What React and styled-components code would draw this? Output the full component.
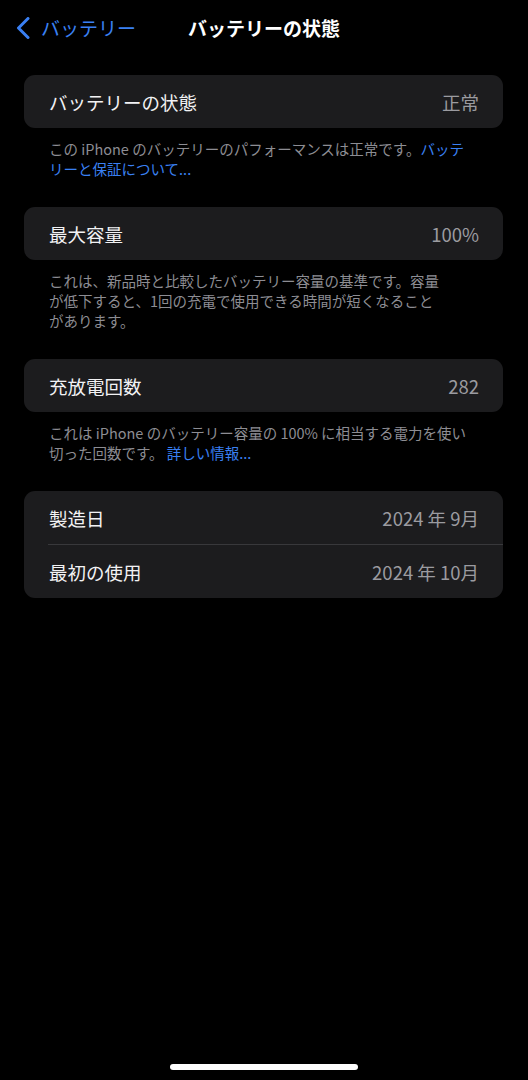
import React from "react";
import styled, { createGlobalStyle } from "styled-components";

const GlobalStyle = createGlobalStyle`
  html, body {
    margin: 0;
    padding: 0;
    background: #000;
  }
  body {
    font-family: "Noto Sans CJK JP", "Noto Sans", sans-serif;
    -webkit-font-smoothing: antialiased;
  }
  * { box-sizing: border-box; }
`;

const Screen = styled.div`
  width: 528px;
  min-height: 1080px;
  background: #000;
  display: flex;
  flex-direction: column;
`;

const NavBar = styled.header`
  height: 55px;
  display: grid;
  grid-template-columns: 1fr auto 1fr;
  align-items: center;
  padding-top: 1px;
`;

const BackButton = styled.button`
  justify-self: start;
  display: flex;
  align-items: center;
  gap: 11px;
  padding: 0 0 0 16px;
  background: none;
  border: none;
  color: #3a80f3;
  font-family: inherit;
  font-size: 19px;
  line-height: 24px;
  cursor: pointer;
`;

const Title = styled.h1`
  margin: 0;
  color: #fff;
  font-size: 19px;
  font-weight: 700;
  line-height: 24px;
`;

const Content = styled.main`
  padding: 20px 25px 0 24px;
  display: flex;
  flex-direction: column;
  gap: 28px;
`;

const Section = styled.section`
  display: flex;
  flex-direction: column;
`;

const Card = styled.div`
  background: #1c1c1e;
  border-radius: 11px;
  overflow: hidden;
`;

const Row = styled.div`
  height: 53px;
  display: flex;
  align-items: center;
  justify-content: space-between;
  padding: 0 24px 0 25px;
`;

const Label = styled.span`
  color: #f2f2f4;
  font-size: 18.5px;
  font-weight: 400;
  line-height: 24px;
`;

const Value = styled.span`
  color: #9b9ba0;
  font-size: 18.5px;
  line-height: 24px;
`;

const Divider = styled.div`
  height: 1px;
  margin-left: 24px;
  background: #38383b;
`;

const Footnote = styled.p`
  margin: 0;
  padding: 11px 25px 0 25px;
  color: #8d8d93;
  font-size: 14.5px;
  line-height: 20px;
  white-space: nowrap;
`;

const Link = styled.a`
  color: #3a80f3;
  text-decoration: none;
`;

const HomeBar = styled.div`
  margin-top: auto;
  align-self: center;
  width: 188px;
  height: 6px;
  border-radius: 3px;
  background: #fff;
  margin-bottom: 10px;
`;

const Chevron = () => (
  <svg width="14" height="22" viewBox="0 0 14 22" fill="none">
    <path
      d="M12 1.5 L2.5 11 L12 20.5"
      stroke="#3a80f3"
      strokeWidth="3"
      strokeLinecap="round"
      strokeLinejoin="round"
    />
  </svg>
);

const Item = ({ label, value }) => (
  <Row>
    <Label>{label}</Label>
    <Value>{value}</Value>
  </Row>
);

export default function App() {
  return (
    <>
      <GlobalStyle />
      <Screen>
        <NavBar>
          <BackButton>
            <Chevron />
            バッテリー
          </BackButton>
          <Title>バッテリーの状態</Title>
          <span />
        </NavBar>
        <Content>
          <Section>
            <Card>
              <Item label="バッテリーの状態" value="正常" />
            </Card>
            <Footnote>
              この iPhone のバッテリーのパフォーマンスは正常です。
              <Link href="#">
                バッテ
                <br />
                リーと保証について...
              </Link>
            </Footnote>
          </Section>
          <Section>
            <Card>
              <Item label="最大容量" value="100%" />
            </Card>
            <Footnote>
              これは、新品時と比較したバッテリー容量の基準です。容量
              <br />
              が低下すると、1回の充電で使用できる時間が短くなること
              <br />
              があります。
            </Footnote>
          </Section>
          <Section>
            <Card>
              <Item label="充放電回数" value="282" />
            </Card>
            <Footnote>
              これは iPhone のバッテリー容量の 100% に相当する電力を使い
              <br />
              切った回数です。 <Link href="#">詳しい情報...</Link>
            </Footnote>
          </Section>
          <Section>
            <Card>
              <Item label="製造日" value="2024 年 9月" />
              <Divider />
              <Item label="最初の使用" value="2024 年 10月" />
            </Card>
          </Section>
        </Content>
        <HomeBar />
      </Screen>
    </>
  );
}
